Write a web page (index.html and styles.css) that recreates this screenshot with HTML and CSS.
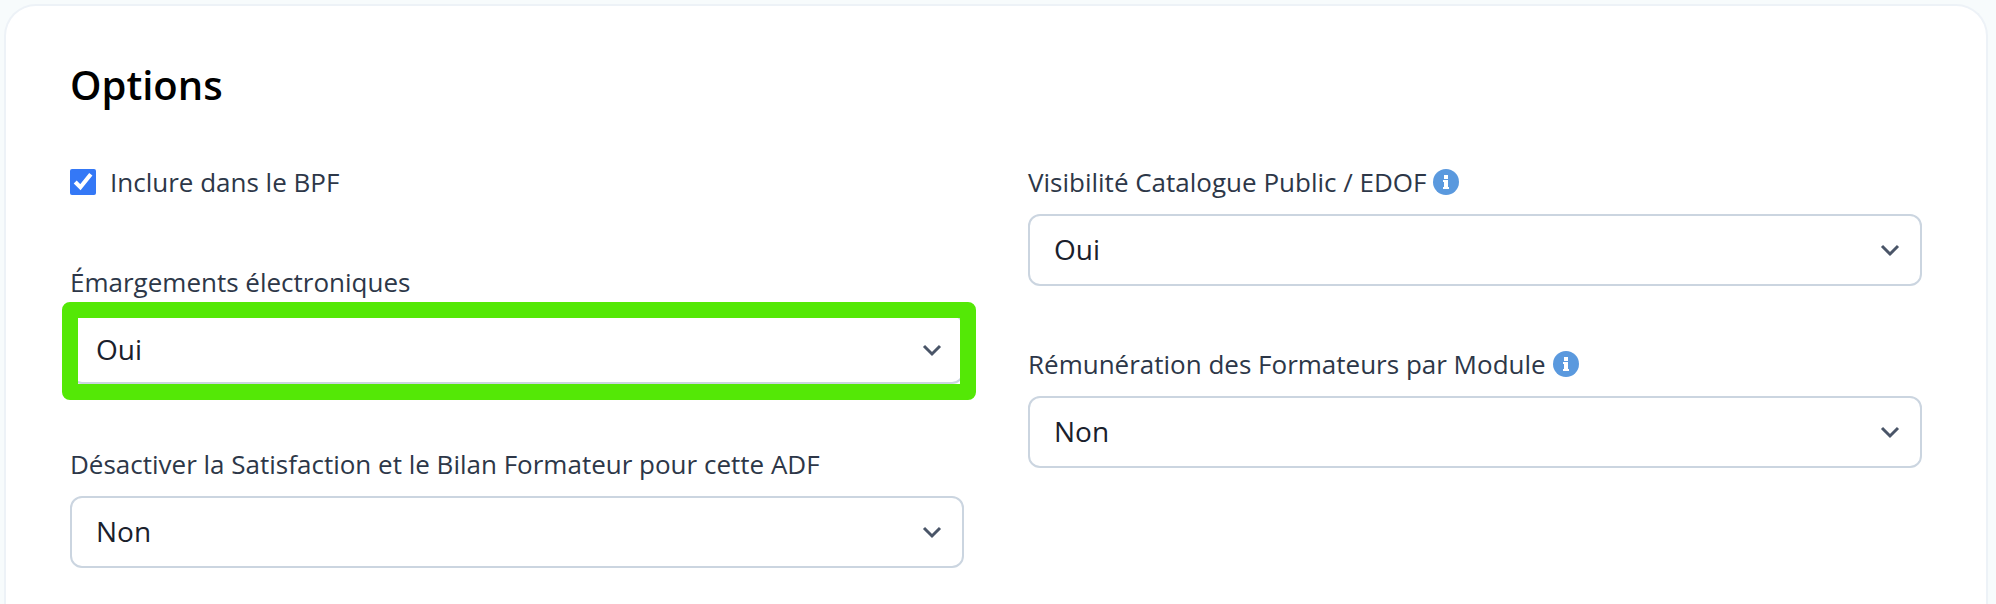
FILE: index.html
```html
<!DOCTYPE html>
<html lang="fr">
  <head>
    <meta charset="UTF-8" />
    <meta name="viewport" content="width=device-width, initial-scale=1.0" />
    <title>Options</title>
    <link rel="stylesheet" href="styles.css">
  </head>
  <body>
    <form class="card">
      <h2>Options</h2>
      <div class="columns">
        <!-- Left column -->
        <div class="column">
          <div class="check-row">
            <input type="checkbox" id="bpf" checked />
            <label for="bpf">Inclure dans le BPF</label>
          </div>
          <div class="field">
            <label for="emargements">Émargements électroniques</label>
            <div class="select-box highlight">
              <select id="emargements">
                <option>Oui</option>
                <option>Non</option>
              </select>
              <svg class="chevron" viewBox="0 0 20 20"><path d="M2 6l8 8 8-8" /></svg>
            </div>
          </div>
          <div class="field">
            <label for="satisfaction">Désactiver la Satisfaction et le Bilan Formateur pour cette ADF</label>
            <div class="select-box">
              <select id="satisfaction">
                <option>Non</option>
                <option>Oui</option>
              </select>
              <svg class="chevron" viewBox="0 0 20 20"><path d="M2 6l8 8 8-8" /></svg>
            </div>
          </div>
        </div>
        <!-- Right column -->
        <div class="column">
          <div class="field">
            <div class="label-row">
              <label for="visibilite">Visibilité Catalogue Public / EDOF</label>
              <svg class="info" viewBox="0 0 26 26"><circle cx="13" cy="13" r="13" /><path d="M11 6h4v4h-4zM10 11h5v7h1v2h-6v-2h1v-5h-1z" /></svg>
            </div>
            <div class="select-box">
              <select id="visibilite">
                <option>Oui</option>
                <option>Non</option>
              </select>
              <svg class="chevron" viewBox="0 0 20 20"><path d="M2 6l8 8 8-8" /></svg>
            </div>
          </div>
          <div class="field">
            <div class="label-row">
              <label for="remuneration">Rémunération des Formateurs par Module</label>
              <svg class="info" viewBox="0 0 26 26"><circle cx="13" cy="13" r="13" /><path d="M11 6h4v4h-4zM10 11h5v7h1v2h-6v-2h1v-5h-1z" /></svg>
            </div>
            <div class="select-box">
              <select id="remuneration">
                <option>Non</option>
                <option>Oui</option>
              </select>
              <svg class="chevron" viewBox="0 0 20 20"><path d="M2 6l8 8 8-8" /></svg>
            </div>
          </div>
        </div>
      </div>
    </form>
  </body>
</html>
```
FILE: styles.css
```css
* {
  margin: 0;
  padding: 0;
  box-sizing: border-box;
  font-family: "Open Sans", "Noto Sans", sans-serif;
}

body {
  min-height: 100vh;
  padding: 4px 8px 0 4px;
  display: flex;
  background: #f7fbfc;
  color: #2d3748;
}

/* Card */
.card {
  flex: 1;
  padding: 52px 64px 32px;
  background: #fff;
  border: 2px solid #edf2f7;
  border-bottom: none;
  border-radius: 32px 32px 0 0;
}

h2 {
  margin-bottom: 52px;
  font-size: 40px;
  font-weight: 600;
  line-height: 54px;
  color: #000;
}

.columns {
  display: grid;
  grid-template-columns: 1fr 1fr;
  gap: 64px;
}

.column {
  display: flex;
  flex-direction: column;
  gap: 60px;
}

/* Labels */
label {
  font-size: 26px;
  line-height: 36px;
}

.check-row,
.label-row {
  display: flex;
  align-items: center;
}

.check-row {
  gap: 14px;
  margin-bottom: 4px;
}

.label-row {
  gap: 7px;
}

.field {
  display: flex;
  flex-direction: column;
  gap: 14px;
}

/* Checkbox */
input[type="checkbox"] {
  width: 26px;
  height: 26px;
  accent-color: #3478f6;
}

.info {
  width: 26px;
  height: 26px;
}

.info circle {
  fill: #5a99de;
}

.info path {
  fill: #fff;
}

/* Selects */
.select-box {
  position: relative;
  height: 72px;
}

select {
  width: 100%;
  height: 100%;
  padding: 0 64px 2px 24px;
  appearance: none;
  border: 2px solid #cbd5e0;
  border-radius: 12px;
  background: #fff;
  color: #1a202c;
  font-size: 28px;
}

.chevron {
  position: absolute;
  top: 26px;
  right: 22px;
  width: 20px;
  height: 20px;
  fill: none;
  stroke: #4a5568;
  stroke-width: 3;
  pointer-events: none;
}

/* Green frame over the select */
.highlight select {
  height: 70px;
  padding-bottom: 0;
}

.highlight::after {
  content: "";
  position: absolute;
  inset: -12px -12px -14px -8px;
  border: 16px solid #54e806;
  border-radius: 8px;
  pointer-events: none;
}
```
